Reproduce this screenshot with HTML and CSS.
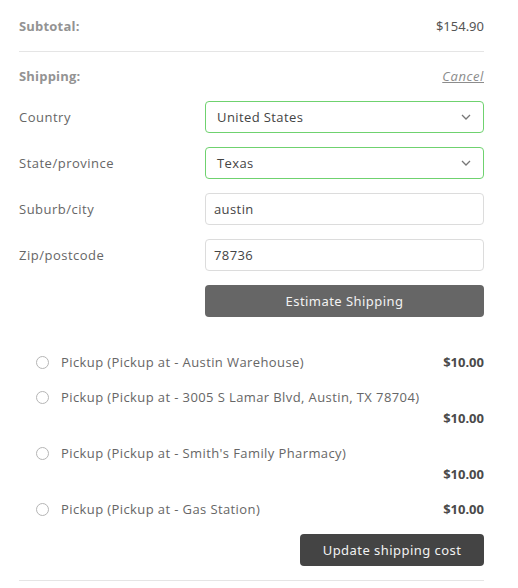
FILE: index.html
```html
<!DOCTYPE html>
<html>
<head>
<meta charset="utf-8">
<link rel="stylesheet" href="styles.css">
</head>
<body>
<div class="cart">
  <div class="total-row">
    <span class="total-label">Subtotal:</span>
    <span class="total-value">$154.90</span>
  </div>
  <div class="ship-head">
    <span class="total-label">Shipping:</span>
    <a class="cancel" href="#">Cancel</a>
  </div>
  <div class="form">
    <label class="flabel">Country</label>
    <div class="field select">
      <span>United States</span>
      <svg class="chev" width="10" height="6" viewBox="0 0 10 6"><path d="M1 1l4 4 4-4" fill="none" stroke="#777" stroke-width="1.3"/></svg>
    </div>
    <label class="flabel">State/province</label>
    <div class="field select">
      <span>Texas</span>
      <svg class="chev" width="10" height="6" viewBox="0 0 10 6"><path d="M1 1l4 4 4-4" fill="none" stroke="#777" stroke-width="1.3"/></svg>
    </div>
    <label class="flabel">Suburb/city</label>
    <div class="field input">austin</div>
    <label class="flabel">Zip/postcode</label>
    <div class="field input">78736</div>
    <div></div>
    <button class="btn estimate">Estimate Shipping</button>
  </div>
  <ul class="options">
    <li class="opt">
      <span class="radio"></span>
      <span class="opt-label">Pickup (Pickup at - Austin Warehouse)</span>
      <span class="price">$10.00</span>
    </li>
    <li class="opt wrap">
      <span class="radio"></span>
      <span class="opt-label">Pickup (Pickup at - 3005 S Lamar Blvd, Austin, TX 78704)</span>
      <span class="price">$10.00</span>
    </li>
    <li class="opt wrap">
      <span class="radio"></span>
      <span class="opt-label">Pickup (Pickup at - Smith's Family Pharmacy)</span>
      <span class="price">$10.00</span>
    </li>
    <li class="opt">
      <span class="radio"></span>
      <span class="opt-label">Pickup (Pickup at - Gas Station)</span>
      <span class="price">$10.00</span>
    </li>
  </ul>
  <div class="update-row">
    <button class="btn update">Update shipping cost</button>
  </div>
</div>
</body>
</html>
```
FILE: styles.css
```css
html, body {
  margin: 0;
  padding: 0;
  background: #fff;
}
.cart {
  width: 465px;
  margin-left: 19px;
  font-family: "Open Sans", "Liberation Sans", sans-serif;
  font-size: 13px;
  color: #666;
  border-bottom: 1px solid #e5e5e5;
  padding-bottom: 14px;
}
.total-row {
  display: flex;
  justify-content: space-between;
  align-items: center;
  height: 20px;
  padding: 16px 0 15px;
  border-bottom: 1px solid #e5e5e5;
}
.total-label {
  font-weight: 700;
  color: #939393;
  letter-spacing: 0.2px;
}
.total-value {
  font-family: "Noto Sans", sans-serif;
  color: #555;
  font-size: 13px;
}
.ship-head {
  display: flex;
  justify-content: space-between;
  align-items: center;
  height: 20px;
  padding-top: 14px;
}
.cancel {
  color: #8c8c8c;
  font-style: italic;
  text-decoration: underline;
  letter-spacing: 0.6px;
}
.form {
  display: grid;
  grid-template-columns: 186px 1fr;
  grid-auto-rows: 32px;
  row-gap: 14px;
  margin-top: 15px;
  align-items: center;
}
.flabel {
  color: #666;
  letter-spacing: 0.5px;
}
.field {
  box-sizing: border-box;
  height: 32px;
  border: 1px solid #dcdcdc;
  border-radius: 4px;
  display: flex;
  align-items: center;
  justify-content: space-between;
  padding: 0 12px 0 8px;
  color: #444;
  letter-spacing: 0.4px;
}
.select {
  border-color: #6fd26f;
  padding-left: 11px;
}
.btn {
  box-sizing: border-box;
  height: 32px;
  border: none;
  border-radius: 4px;
  color: #f2f2f2;
  font-family: "Noto Sans", sans-serif;
  font-size: 13px;
  letter-spacing: 0.45px;
}
.estimate {
  background: #666;
  width: 100%;
}
.options {
  list-style: none;
  margin: 35px 0 0;
  padding: 0 0 0 17px;
  display: flex;
  flex-direction: column;
  gap: 14px;
}
.opt {
  display: flex;
  flex-wrap: wrap;
  align-items: center;
  line-height: 21px;
}
.radio {
  box-sizing: border-box;
  width: 13px;
  height: 13px;
  border: 1px solid #b5b5b5;
  border-radius: 50%;
  margin-right: 12px;
}
.opt-label {
  color: #666;
  letter-spacing: 0.4px;
}
.price {
  margin-left: auto;
  font-family: "Noto Sans", sans-serif;
  font-weight: 700;
  color: #4a4a4a;
}
.opt.wrap .price {
  flex-basis: 100%;
  text-align: right;
}
.update-row {
  display: flex;
  justify-content: flex-end;
  margin-top: 14px;
}
.update {
  background: #444;
  width: 184px;
}
```
